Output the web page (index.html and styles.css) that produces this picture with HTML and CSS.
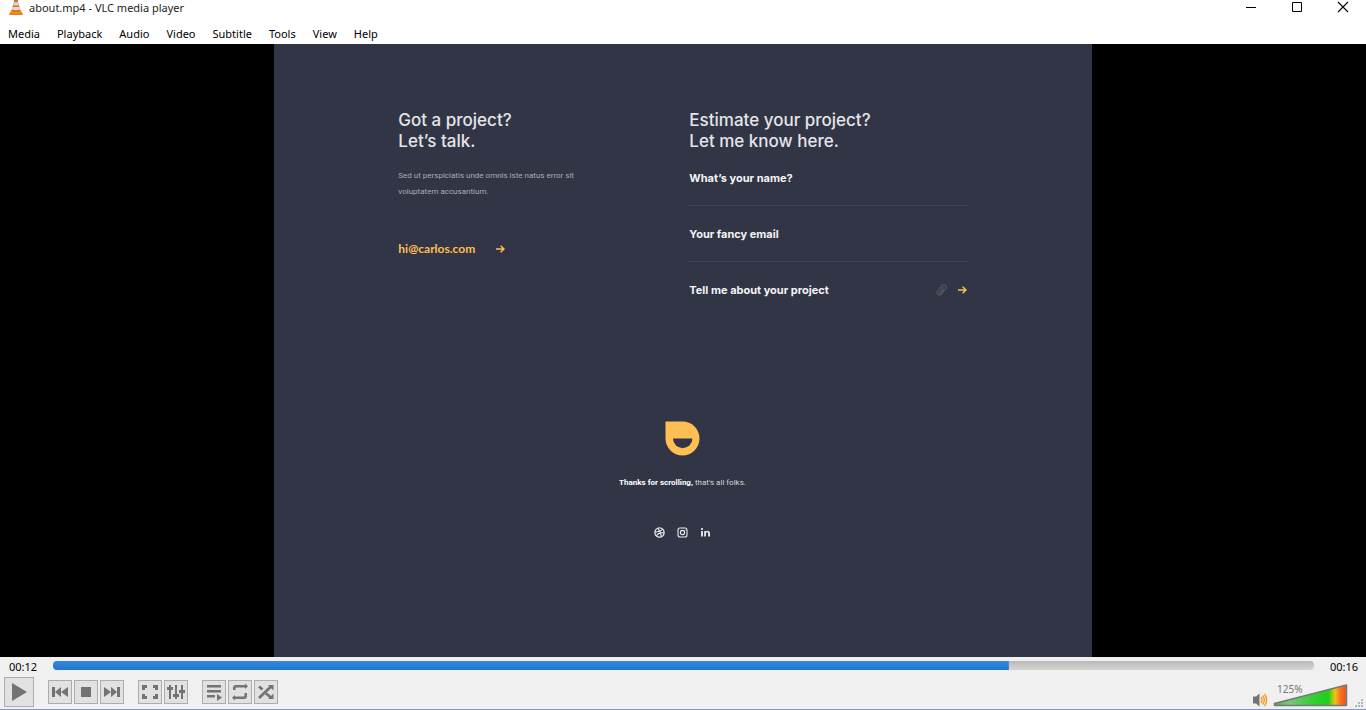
FILE: index.html
```
<!DOCTYPE html>
<html lang="en">
<head>
<meta charset="utf-8">
<title>about.mp4 - VLC media player</title>
<link rel="stylesheet" href="styles.css">
</head>
<body>
<header class="titlebar">
  <svg class="cone" width="16" height="16" viewBox="0 0 16 16">
    <path d="M3.2 10h9.6l2 4.6H1.2z" fill="#f7941d"/>
    <path d="M1.2 13.4h13.6v1.4H1.2z" fill="#d9730d"/>
    <path d="M6.5 0h3l3.1 11.2Q8 13.4 3.4 11.2z" fill="#e8701a"/>
    <path d="M5.9 2.2h4.2l.8 2.7q-2.9 1-5.8 0z" fill="#d4d4da"/>
    <path d="M4.7 7h6.6l.7 2.4q-4 1.600-8 0z" fill="#dcdce2"/>
    <path d="M6.500 0h3l.3 1H6.200z" fill="#8b7b72"/>
  </svg>
  <h1 class="title">about.mp4 - VLC media player</h1>
  <div class="window-buttons">
    <button class="win" aria-label="Minimize"><svg width="12" height="12" viewBox="0 0 12 12"><path d="M1 6.5h10" stroke="#000"/></svg></button>
    <button class="win" aria-label="Maximize"><svg width="12" height="12" viewBox="0 0 12 12"><path d="M1.5 1.5h9v9h-9z" fill="none" stroke="#000"/></svg></button>
    <button class="win" aria-label="Close"><svg width="12" height="12" viewBox="0 0 12 12"><path d="M1 1l10 10M11 1L1 11" stroke="#000" stroke-width="1.1"/></svg></button>
  </div>
</header>
<nav class="menubar">
  <button>Media</button><button>Playback</button><button>Audio</button><button>Video</button><button>Subtitle</button><button>Tools</button><button>View</button><button>Help</button>
</nav>
<main class="video">
  <div class="scene">
    <div class="columns">
      <section class="talk">
        <h2>Got a project?<br>Let’s talk.</h2>
        <p class="intro">Sed ut perspiciatis unde omnis iste natus error sit voluptatem accusantium.</p>
        <a class="mail" href="mailto:hi@carlos.com">hi@carlos.com
          <svg width="9" height="8" viewBox="0 0 9 8"><path d="M0 4h7.800M4.600.7L8 4 4.600 7.300" fill="none" stroke="#ffbf52" stroke-width="1.500"/></svg></a>
      </section>
      <form class="estimate">
        <h2>Estimate your project?<br>Let me know here.</h2>
        <div class="field"><label for="name">What’s your name?</label><input id="name" type="text"></div>
        <div class="field"><label for="email">Your fancy email</label><input id="email" type="email"></div>
        <div class="message">
          <label for="about">Tell me about your project</label><input id="about" type="text">
          <button type="button" aria-label="Attach a file"><svg width="11" height="12" viewBox="0 0 11 12"><path d="M9.500 5L5.500 10Q4 11.700 2.100 10.500T1.500 7L5.800 1.700Q7.500 0 9.200 1.400T9.500 5M7.600 3.200L3.600 8q-.6 1 .1 1.400t1.400-.4L8 5.300" fill="none" stroke="#565967" stroke-width="1.100"/></svg></button>
          <button type="submit" aria-label="Send"><svg width="9" height="8" viewBox="0 0 9 8"><path d="M0 4h7.800M4.600.7L8 4 4.600 7.300" fill="none" stroke="#ffbf52" stroke-width="1.500"/></svg></button>
        </div>
      </form>
    </div>
    <footer class="closing">
      <svg width="35" height="35" viewBox="0 0 35 35"><path d="M.5.5h17a17 17 0 1 1-17 17z" fill="#ffbf52"/><path d="M8 17.500h19.400a9.700 9.700 0 0 1-19.400 0z" fill="#323545"/></svg>
      <p><strong>Thanks for scrolling,</strong> that's all folks.</p>
      <div class="social">
        <a href="#dribbble" aria-label="Dribbble"><svg width="11" height="11" viewBox="0 0 11 11" fill="none" stroke="#e9eaee"><circle cx="5.5" cy="5.5" r="4.6" stroke-width="1.3"/><path d="M3.7 1.4Q6.6 4.6 7.4 9.5M1 5Q6.2 5.2 8.6 2.2M2.4 8.8Q5 4.9 10 6" stroke-width="1.1"/></svg></a>
        <a href="#instagram" aria-label="Instagram"><svg width="11" height="11" viewBox="0 0 11 11" fill="none" stroke="#e9eaee"><rect x="1" y="1" width="9" height="9" rx="2" stroke-width="1.1"/><circle cx="5.5" cy="5.5" r="2.1" stroke-width="1.1"/><circle cx="8.1" cy="2.9" r=".5" fill="#e9eaee" stroke="none"/></svg></a>
        <a href="#linkedin" aria-label="LinkedIn"><svg width="11" height="11" viewBox="0 0 11 11" fill="#f0f0f3"><circle cx="2" cy="2" r="1.1"/><path d="M1.1 4h1.800v5.600H1.100zM4.200 4h1.700v.8Q6.500 3.800 7.800 3.800q2.200 0 2.200 2.600v3.200H8.200v-3q0-1.300-1.100-1.300T5.900 6.700v2.900H4.200z"/></svg></a>
      </div>
    </footer>
  </div>
</main>
<div class="player">
  <div class="timeline">
    <time class="time">00:12</time>
    <input class="seek" type="range" min="0" max="1000" value="758" aria-label="Position" style="--played:75.8%">
    <time class="time">00:16</time>
  </div>
  <div class="toolbar">
    <button class="tool play" aria-label="Play"><svg width="28" height="28" viewBox="0 0 28 28"><path d="M7 5l15 9-15 9z"/></svg></button>
    <div class="group">
      <button class="tool" aria-label="Previous"><svg width="22" height="22" viewBox="0 0 22 22"><path d="M3 6h3v10H3zM12 6v10l-6-5zM19 6v10l-7-5z"/></svg></button>
      <button class="tool" aria-label="Stop"><svg width="22" height="22" viewBox="0 0 22 22"><path d="M6 6h10v10H6z"/></svg></button>
      <button class="tool" aria-label="Next"><svg width="22" height="22" viewBox="0 0 22 22"><path d="M16 6h3v10h-3zM10 6v10l6-5zM3 6v10l7-5z"/></svg></button>
    </div>
    <div class="group">
      <button class="tool" aria-label="Full screen"><svg width="22" height="22" viewBox="0 0 22 22"><path d="M3 4h5v3H6v2H3zM14 4h5v5h-3V7h-2zM3 13h3v2h2v3H3zM16 13h3v5h-5v-3h2z"/></svg></button>
      <button class="tool" aria-label="Extended settings"><svg width="22" height="22" viewBox="0 0 22 22"><path d="M4 4h2v14H4zM2 6h6v3H2zM10 4h2v14h-2zM8 13h6v3H8zM16 4h2v14h-2zM14 9h6v3h-6z"/></svg></button>
    </div>
    <div class="group">
      <button class="tool" aria-label="Playlist"><svg width="22" height="22" viewBox="0 0 22 22"><path d="M4 4h14v2.500H4zM4 9h14v2.500H4zM4 14h8v2.500H4zM14 13l5 3.500-5 3.500z"/></svg></button>
      <button class="tool" aria-label="Loop"><svg width="22" height="22" viewBox="0 0 22 22"><path d="M4 9V7q0-3 3-3h9V2.500l3 2.700-3 2.800V6.500H7.500q-1 0-1 1V9zM18 12v3q0 3-3 3H6v1.500l-3-2.700L6 14v1.500h8.500q1 0 1-1V12z"/></svg></button>
      <button class="tool" aria-label="Random"><svg width="22" height="22" viewBox="0 0 22 22"><path d="M4 5.500l3.500 3M11 12.500l5 4M4 17L16 5.500" fill="none" stroke="#737373" stroke-width="2.800"/><path d="M13 4h5.500v5.500zM13 18h5.500v-5.500z"/></svg></button>
    </div>
    <div class="sound">
      <button class="mute" aria-label="Mute"><svg width="15" height="14" viewBox="0 0 15 14"><path d="M0 3.500h3L6.500.5v13L3 10.500H0z" fill="#737373"/><path d="M8 4q2 3 0 6M9.600 2.500q3.500 4.500 0 9M11.600 1q4 6 0 12" fill="none" stroke="#f8981d" stroke-width="1.400"/></svg></button>
      <div class="volume">
        <svg width="75" height="23" viewBox="0 0 75 23">
          <defs><linearGradient id="level"><stop offset="0" stop-color="#55a955"/><stop offset=".2" stop-color="#77c777"/><stop offset=".58" stop-color="#2bcf2b"/><stop offset=".75" stop-color="#21cf17"/><stop offset=".84" stop-color="#f0c414"/><stop offset=".92" stop-color="#f76d20"/><stop offset="1" stop-color="#ee4f25"/></linearGradient></defs>
          <path d="M1.500 19.500L73.500 1v20.500h-72z" fill="url(#level)" stroke="#777" stroke-width="1.500" stroke-linejoin="round"/>
        </svg>
        <label class="percent" for="level-input">125%</label>
        <input id="level-input" type="range" min="0" max="125" value="125">
      </div>
      <svg class="grip" width="8" height="8" viewBox="0 0 8 8" fill="#b5b5b5"><path d="M6 0h2v2H6zM3 3h2v2H3zM6 3h2v2H6zM0 6h2v2H0zM3 6h2v2H3zM6 6h2v2H6z"/></svg>
    </div>
  </div>
</div>
</body>
</html>
```
FILE: styles.css
```
* { box-sizing: border-box; }
body {
  margin: 0;
  height: 100vh;
  display: flex;
  flex-direction: column;
  overflow: hidden;
  background: #fff;
  color: #000;
  font: 12px/16px "Noto Sans", "Open Sans", sans-serif;
}
h1, h2, p { margin: 0; }
button, input { margin: 0; padding: 0; border: 0; background: none; color: inherit; font: inherit; }
button { display: flex; align-items: center; justify-content: center; }
a { color: inherit; text-decoration: none; }
svg { display: block; flex: none; }

.titlebar { display: flex; height: 24px; padding-left: 8px; align-items: flex-start; }
.title { margin-left: 5px; font: 11px/16px "Noto Sans", sans-serif; color: #222; }
.window-buttons { display: flex; margin-left: auto; }
.win { width: 46px; height: 14px; }

.menubar { display: flex; height: 20px; padding-left: 8px; gap: 17px; }
.menubar button { font-size: 11px; line-height: 20px; }

.video { flex: 1; min-height: 0; display: flex; justify-content: center; background: #000; }
.scene {
  height: 100%;
  aspect-ratio: 4 / 3;
  padding: 66px 125px 0 124px;
  background: #323545;
  color: #f4f4f6;
  font-family: Lato, sans-serif;
}
.columns { display: grid; grid-template-columns: 291px 1fr; }
.scene h2 { font: 500 17px/21px "Inter", sans-serif; color: #e4e5e9; }
.intro { width: 180px; margin-top: 16px; font: 8px/16px Roboto, sans-serif; color: #a9abb5; }
.mail { display: flex; align-items: center; gap: 21px; margin-top: 41px; color: #ffbf52; font: 700 12px/16px Lato, sans-serif; }
.estimate h2 { margin-bottom: 18px; }
.field { display: flex; flex-direction: column; margin-bottom: 20px; }
.estimate label { font: 700 11px/16px "Inter", sans-serif; }
.field input { height: 20px; border-bottom: 1px solid #414453; }
.message { display: flex; align-items: center; gap: 11px; }
.message input { flex: 1; min-width: 0; }

.closing { display: flex; flex-direction: column; align-items: center; margin-top: 123px; }
.closing p { margin-top: 19px; font: 8px/16px Roboto, sans-serif; color: #d3d4da; }
.closing strong { color: #fff; font-weight: 700; }
.social { display: flex; gap: 12px; margin-top: 36px; }

.player { background: #f0f0f0; border-bottom: 1px solid #7f97cf; }
.timeline { display: flex; height: 20px; padding: 0 8px 0 9px; gap: 16px; }
.time { font: 11px/20px "Noto Sans", sans-serif; }
.seek {
  appearance: none;
  flex: 1;
  min-width: 0;
  height: 9px;
  margin-top: 4px;
  border-radius: 4px;
  background:
    linear-gradient(#3387dc, #1f79cc) 0 0 / var(--played) 100% no-repeat,
    linear-gradient(#b8b8b8, #d6d6d6);
}
.seek::-webkit-slider-thumb { appearance: none; width: 1px; height: 9px; }
.toolbar { display: flex; align-items: center; padding: 0 3px 2px 4px; gap: 14px; }
.group { display: flex; gap: 2px; }
.tool { width: 24px; height: 24px; background: #e1e1e1; border: 1px solid #adadad; }
.tool svg { fill: #737373; }
.play { width: 30px; height: 30px; }
.sound { display: flex; align-items: flex-end; align-self: flex-end; margin-left: auto; }
.mute { margin-right: 5px; }
.volume { position: relative; }
.percent { position: absolute; left: 4px; top: -3px; font: 10px/16px "Noto Sans", sans-serif; color: #777; }
.volume input { position: absolute; inset: 0; width: 100%; height: 100%; opacity: 0; }
.grip { margin-left: 7px; }
```
